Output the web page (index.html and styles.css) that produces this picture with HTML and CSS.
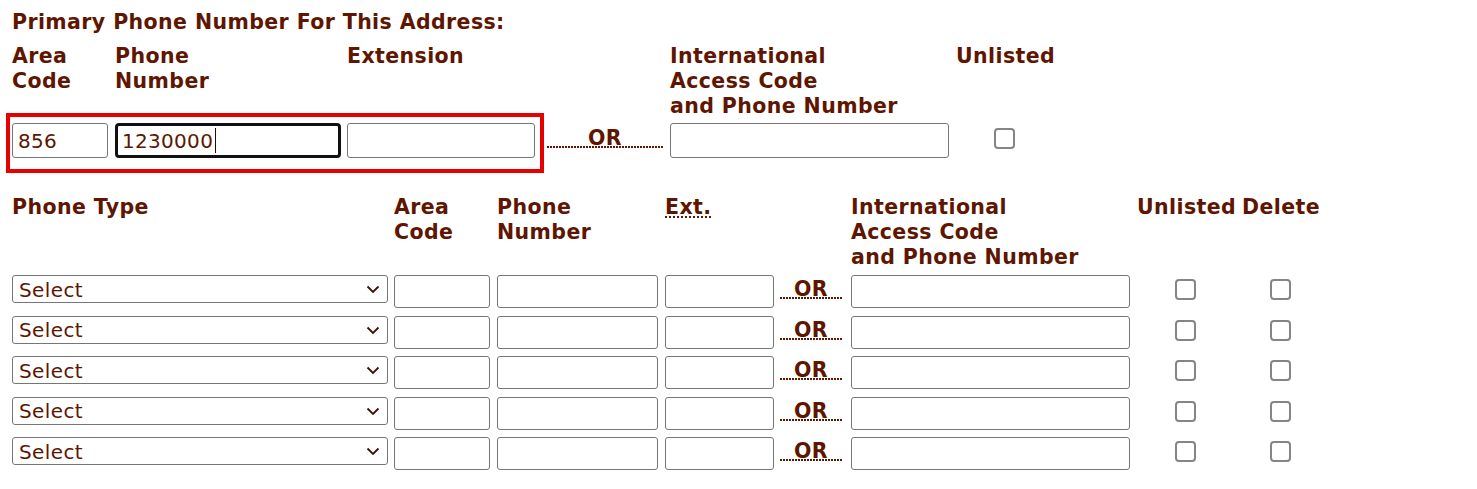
FILE: index.html
```html
<!DOCTYPE html>
<html lang="en">
<head>
<meta charset="utf-8">
<title>Phone Numbers</title>
<link rel="stylesheet" href="styles.css">
</head>
<body>
<div class="page">
  <h2 class="title">Primary Phone Number For This Address:</h2>
  <div class="primary">
    <div class="hd">Area<br>Code</div>
    <div class="hd">Phone<br>Number</div>
    <div class="hd">Extension</div>
    <div class="hd"></div>
    <div class="hd">International<br>Access Code<br>and Phone Number</div>
    <div class="hd">Unlisted</div>

    <div class="cell"><input class="field p-area" type="text" value="856"></div>
    <div class="cell caret-wrap"><input class="field p-phone focused" type="text" value="1230000"><span class="caret"></span></div>
    <div class="cell"><input class="field p-ext" type="text" value=""></div>
    <div class="cell"><span class="or or-top">OR</span></div>
    <div class="cell"><input class="field p-intl" type="text" value=""></div>
    <div class="cell check-cell check-top"><input class="check" type="checkbox"></div>
  </div>

  <div class="others">
    <div class="others-head">
      <div class="hd">Phone Type</div>
      <div class="hd">Area<br>Code</div>
      <div class="hd">Phone<br>Number</div>
      <div class="hd"><abbr class="abbr" title="Extension">Ext.</abbr></div>
      <div class="hd"></div>
      <div class="hd">International<br>Access Code<br>and Phone Number</div>
      <div class="hd">Unlisted</div>
      <div class="hd">Delete</div>
    </div>

    <div class="phone-row">
      <div class="select-wrap"><select class="sel"><option>Select</option></select><svg class="chev" width="14" height="9" viewBox="0 0 14 9"><path d="M1.5 1.5 L7 7 L12.5 1.5" fill="none" stroke="#3a1208" stroke-width="1.8"/></svg></div>
      <div class="cell"><input class="field r-area" type="text"></div>
      <div class="cell"><input class="field r-phone" type="text"></div>
      <div class="cell"><input class="field r-ext" type="text"></div>
      <div class="cell"><span class="or or-row">OR</span></div>
      <div class="cell"><input class="field r-intl" type="text"></div>
      <div class="cell check-cell unl"><input class="check" type="checkbox"></div>
      <div class="cell check-cell del"><input class="check" type="checkbox"></div>
    </div>
    <div class="phone-row">
      <div class="select-wrap"><select class="sel"><option>Select</option></select><svg class="chev" width="14" height="9" viewBox="0 0 14 9"><path d="M1.5 1.5 L7 7 L12.5 1.5" fill="none" stroke="#3a1208" stroke-width="1.8"/></svg></div>
      <div class="cell"><input class="field r-area" type="text"></div>
      <div class="cell"><input class="field r-phone" type="text"></div>
      <div class="cell"><input class="field r-ext" type="text"></div>
      <div class="cell"><span class="or or-row">OR</span></div>
      <div class="cell"><input class="field r-intl" type="text"></div>
      <div class="cell check-cell unl"><input class="check" type="checkbox"></div>
      <div class="cell check-cell del"><input class="check" type="checkbox"></div>
    </div>
    <div class="phone-row">
      <div class="select-wrap"><select class="sel"><option>Select</option></select><svg class="chev" width="14" height="9" viewBox="0 0 14 9"><path d="M1.5 1.5 L7 7 L12.5 1.5" fill="none" stroke="#3a1208" stroke-width="1.8"/></svg></div>
      <div class="cell"><input class="field r-area" type="text"></div>
      <div class="cell"><input class="field r-phone" type="text"></div>
      <div class="cell"><input class="field r-ext" type="text"></div>
      <div class="cell"><span class="or or-row">OR</span></div>
      <div class="cell"><input class="field r-intl" type="text"></div>
      <div class="cell check-cell unl"><input class="check" type="checkbox"></div>
      <div class="cell check-cell del"><input class="check" type="checkbox"></div>
    </div>
    <div class="phone-row">
      <div class="select-wrap"><select class="sel"><option>Select</option></select><svg class="chev" width="14" height="9" viewBox="0 0 14 9"><path d="M1.5 1.5 L7 7 L12.5 1.5" fill="none" stroke="#3a1208" stroke-width="1.8"/></svg></div>
      <div class="cell"><input class="field r-area" type="text"></div>
      <div class="cell"><input class="field r-phone" type="text"></div>
      <div class="cell"><input class="field r-ext" type="text"></div>
      <div class="cell"><span class="or or-row">OR</span></div>
      <div class="cell"><input class="field r-intl" type="text"></div>
      <div class="cell check-cell unl"><input class="check" type="checkbox"></div>
      <div class="cell check-cell del"><input class="check" type="checkbox"></div>
    </div>
    <div class="phone-row">
      <div class="select-wrap"><select class="sel"><option>Select</option></select><svg class="chev" width="14" height="9" viewBox="0 0 14 9"><path d="M1.5 1.5 L7 7 L12.5 1.5" fill="none" stroke="#3a1208" stroke-width="1.8"/></svg></div>
      <div class="cell"><input class="field r-area" type="text"></div>
      <div class="cell"><input class="field r-phone" type="text"></div>
      <div class="cell"><input class="field r-ext" type="text"></div>
      <div class="cell"><span class="or or-row">OR</span></div>
      <div class="cell"><input class="field r-intl" type="text"></div>
      <div class="cell check-cell unl"><input class="check" type="checkbox"></div>
      <div class="cell check-cell del"><input class="check" type="checkbox"></div>
    </div>
  </div>

  <div class="highlight"></div>
</div>
</body>
</html>
```

FILE: styles.css
```css
html, body {
  margin: 0;
  padding: 0;
  background: #ffffff;
}

body {
  font-family: "DejaVu Sans", Verdana, sans-serif;
  color: #5e1600;
}

.page {
  position: relative;
  padding: 10px 12px 0 12px;
}

.title {
  margin: 0 0 9px 0;
  font-size: 20.5px;
  line-height: 25px;
  font-weight: bold;
  letter-spacing: 0.4px;
}

.hd {
  font-size: 20.5px;
  line-height: 25px;
  font-weight: bold;
  white-space: nowrap;
  letter-spacing: 0.4px;
}

.primary {
  display: grid;
  grid-template-columns: 103px 232px 200px 123px 286px 100px;
  row-gap: 4px;
  align-items: start;
}

.cell {
  display: flex;
  align-items: flex-start;
}

.field {
  box-sizing: border-box;
  margin: 0;
  border: 1px solid #767676;
  border-radius: 3px;
  background: #fff;
  font-family: "DejaVu Sans", Verdana, sans-serif;
  font-size: 20px;
  letter-spacing: 0.3px;
  color: #5e1600;
  padding: 0 0 0 5px;
  outline: none;
}

.p-area { width: 96px; height: 35px; }
.p-phone { width: 226px; height: 35px; }
.p-ext { width: 188px; height: 35px; }
.p-intl { width: 279px; height: 35px; }

.focused {
  border: 3px solid #111;
  border-radius: 4px;
  padding-left: 4px;
}

.caret-wrap {
  position: relative;
}

.caret {
  position: absolute;
  left: 100px;
  top: 5px;
  width: 1px;
  height: 25px;
  background: #2a0a00;
}

.or {
  display: block;
  box-sizing: border-box;
  height: 22px;
  line-height: 24px;
  font-size: 20.5px;
  font-weight: bold;
  letter-spacing: 0.4px;
  text-align: center;
  background-image: repeating-linear-gradient(to right, #5e1600 0 2px, transparent 2px 3px);
  background-size: 100% 2px;
  background-position: left bottom;
  background-repeat: no-repeat;
}

.or-top {
  width: 116px;
  margin-top: 3px;
}

.or-row {
  width: 62px;
  margin-top: 2px;
}

.check-cell {
  justify-content: center;
}

.check-top {
  width: 97px;
  margin-top: 5px;
}

.check {
  appearance: none;
  -webkit-appearance: none;
  box-sizing: border-box;
  width: 21px;
  height: 21px;
  margin: 0;
  border: 2px solid #858585;
  border-radius: 4px;
  background: #fff;
}

.others {
  margin-top: 37px;
}

.others-head,
.phone-row {
  display: grid;
  grid-template-columns: 382px 103px 168px 115px 71px 286px 105px 80px;
  align-items: start;
}

.others-head {
  margin-bottom: 5px;
}

.phone-row + .phone-row {
  margin-top: 7.5px;
}

.abbr {
  text-decoration: underline dotted;
  text-decoration-thickness: 2px;
  text-underline-offset: 2px;
}

.select-wrap {
  position: relative;
  width: 376px;
  height: 28px;
}

.sel {
  appearance: none;
  -webkit-appearance: none;
  box-sizing: border-box;
  width: 376px;
  height: 28px;
  margin: 0;
  padding: 1px 0 0 6px;
  border: 1px solid #767676;
  border-radius: 3px;
  background: #fff;
  font-family: "DejaVu Sans", Verdana, sans-serif;
  font-size: 20px;
  letter-spacing: 0.4px;
  color: #5e1600;
  outline: none;
}

.chev {
  position: absolute;
  right: 8px;
  top: 10px;
  pointer-events: none;
}

.r-area { width: 96px; height: 33px; }
.r-phone { width: 161px; height: 33px; }
.r-ext { width: 109px; height: 33px; }
.r-intl { width: 279px; height: 33px; }

.unl { width: 97px; margin-top: 4px; }
.del { width: 77px; margin-top: 4px; }

.highlight {
  position: absolute;
  left: 6px;
  top: 113px;
  width: 538px;
  height: 60px;
  box-sizing: border-box;
  border: 4px solid #e60000;
  pointer-events: none;
}
```
